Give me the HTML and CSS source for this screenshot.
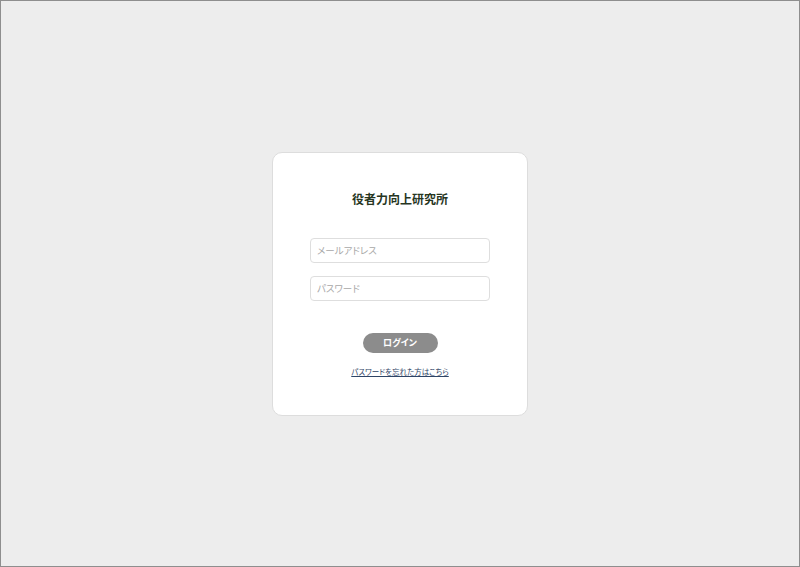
FILE: index.html
```html
<!DOCTYPE html>
<html lang="ja">
<head>
<meta charset="utf-8">
<title>ログイン</title>
<link rel="stylesheet" href="styles.css">
</head>
<body>
<main class="page">
  <form class="card">
    <h1 class="title">役者力向上研究所</h1>
    <div class="fields">
      <input class="field" type="email" placeholder="メールアドレス">
      <input class="field" type="password" placeholder="パスワード">
    </div>
    <button class="login" type="button">ログイン</button>
    <a class="forgot" href="#">パスワードを忘れた方はこちら</a>
  </form>
</main>
</body>
</html>
```
FILE: styles.css
```css
* { box-sizing: border-box; }
html, body { margin: 0; padding: 0; height: 100%; }
body {
  font-family: "Noto Sans CJK JP", "Noto Sans", sans-serif;
  background: #ededed;
}
.page {
  height: 567px;
  border: 1px solid #8e8e8e;
  display: flex;
  align-items: center;
  justify-content: center;
}
.card {
  width: 256px;
  background: #ffffff;
  border: 1px solid #dddddd;
  border-radius: 10px;
  padding: 36px 37px 37px;
  display: flex;
  flex-direction: column;
  align-items: center;
}
.title {
  margin: 0;
  font-size: 12px;
  line-height: 20px;
  font-weight: 700;
  color: #27361f;
}
.fields {
  margin-top: 29px;
  width: 180px;
  display: flex;
  flex-direction: column;
  gap: 13px;
}
.field {
  width: 100%;
  height: 25px;
  border: 1px solid #dedede;
  border-radius: 4px;
  padding: 0 6px;
  font-family: inherit;
  font-size: 9.5px;
  font-feature-settings: "palt";
  color: #333;
  outline: none;
}
.field::placeholder { color: #a8a8a8; }
.login {
  margin-top: 32px;
  width: 75px;
  height: 20px;
  border: none;
  border-radius: 10px;
  background: #8c8c8c;
  color: #ffffff;
  font-family: inherit;
  font-size: 9px;
  font-weight: 700;
  font-feature-settings: "palt";
  padding: 0;
  cursor: pointer;
}
.forgot {
  margin-top: 13px;
  font-size: 7.5px;
  line-height: 12px;
  font-feature-settings: "palt";
  color: #2e4466;
  text-decoration: underline;
}
```
